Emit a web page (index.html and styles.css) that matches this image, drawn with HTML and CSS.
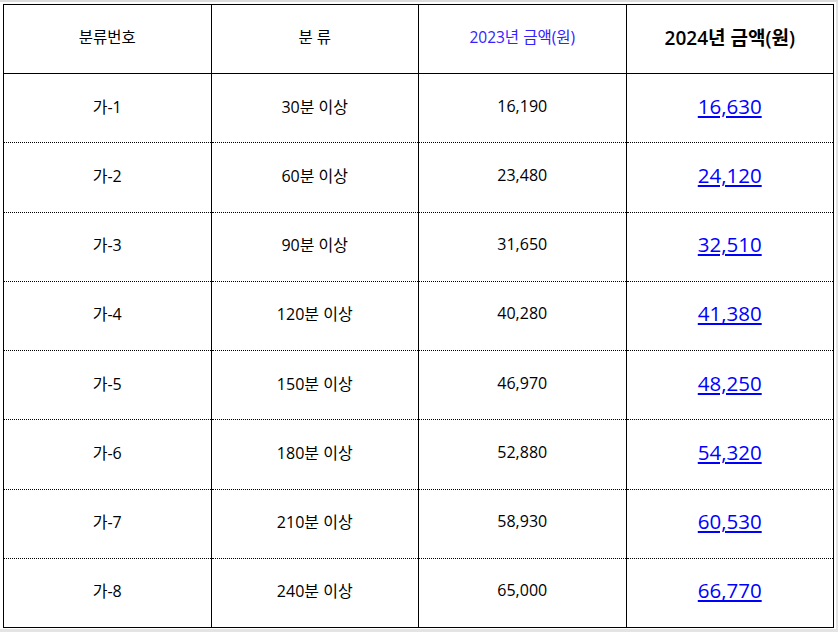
FILE: index.html
```html
<!DOCTYPE html>
<html lang="ko">
<head>
<meta charset="utf-8">
<link rel="stylesheet" href="styles.css">
</head>
<body>
<div class="frame">
<table class="fee">
  <thead>
    <tr>
      <th class="h-plain">분류번호</th>
      <th class="h-plain">분 류</th>
      <th class="h-blue">2023년 금액(원)</th>
      <th class="h-big">2024년 금액(원)</th>
    </tr>
  </thead>
  <tbody>
    <tr><td>가-1</td><td>30분 이상</td><td>16,190</td><td class="new"><a href="#">16,630</a></td></tr>
    <tr><td>가-2</td><td>60분 이상</td><td>23,480</td><td class="new"><a href="#">24,120</a></td></tr>
    <tr><td>가-3</td><td>90분 이상</td><td>31,650</td><td class="new"><a href="#">32,510</a></td></tr>
    <tr><td>가-4</td><td>120분 이상</td><td>40,280</td><td class="new"><a href="#">41,380</a></td></tr>
    <tr><td>가-5</td><td>150분 이상</td><td>46,970</td><td class="new"><a href="#">48,250</a></td></tr>
    <tr><td>가-6</td><td>180분 이상</td><td>52,880</td><td class="new"><a href="#">54,320</a></td></tr>
    <tr><td>가-7</td><td>210분 이상</td><td>58,930</td><td class="new"><a href="#">60,530</a></td></tr>
    <tr><td>가-8</td><td>240분 이상</td><td>65,000</td><td class="new"><a href="#">66,770</a></td></tr>
  </tbody>
</table>
</div>
</body>
</html>
```
FILE: styles.css
```css
html, body {
  margin: 0;
  padding: 0;
  background: #ffffff;
}
body {
  font-family: "Open Sans", "Noto Sans CJK KR", sans-serif;
  color: #000;
}
.frame {
  width: 832px;
  height: 624px;
  padding: 2px 1px 1px 3px;
  border-top: 2px solid #dcdcdc;
  border-right: 3px solid #e4e4e4;
  border-bottom: 3px solid #e4e4e4;
}
.fee {
  width: 831px;
  height: 624px;
  border-collapse: collapse;
  table-layout: fixed;
}
.fee th, .fee td {
  border-left: 1px solid #000;
  border-right: 1px solid #000;
  text-align: center;
  vertical-align: middle;
  padding: 0 0 5px 0;
  font-size: 15.5px;
  font-weight: normal;
}
.fee thead tr {
  height: 69px;
}
.fee th {
  border-top: 1px solid #000;
  border-bottom: 1px solid #000;
}
.fee tbody tr {
  height: 69px;
}
.fee td {
  border-bottom: 1px dotted #000;
  font-size: 16px;
}
.fee tbody tr:last-child td {
  border-bottom: 1px solid #000;
}
.h-blue {
  color: #3322ff;
  font-size: 15.5px;
}
.fee .h-big {
  font-size: 19px;
  font-weight: 600;
}
.new a {
  color: #0000ff;
  font-size: 20.5px;
  text-decoration: underline;
}
```
